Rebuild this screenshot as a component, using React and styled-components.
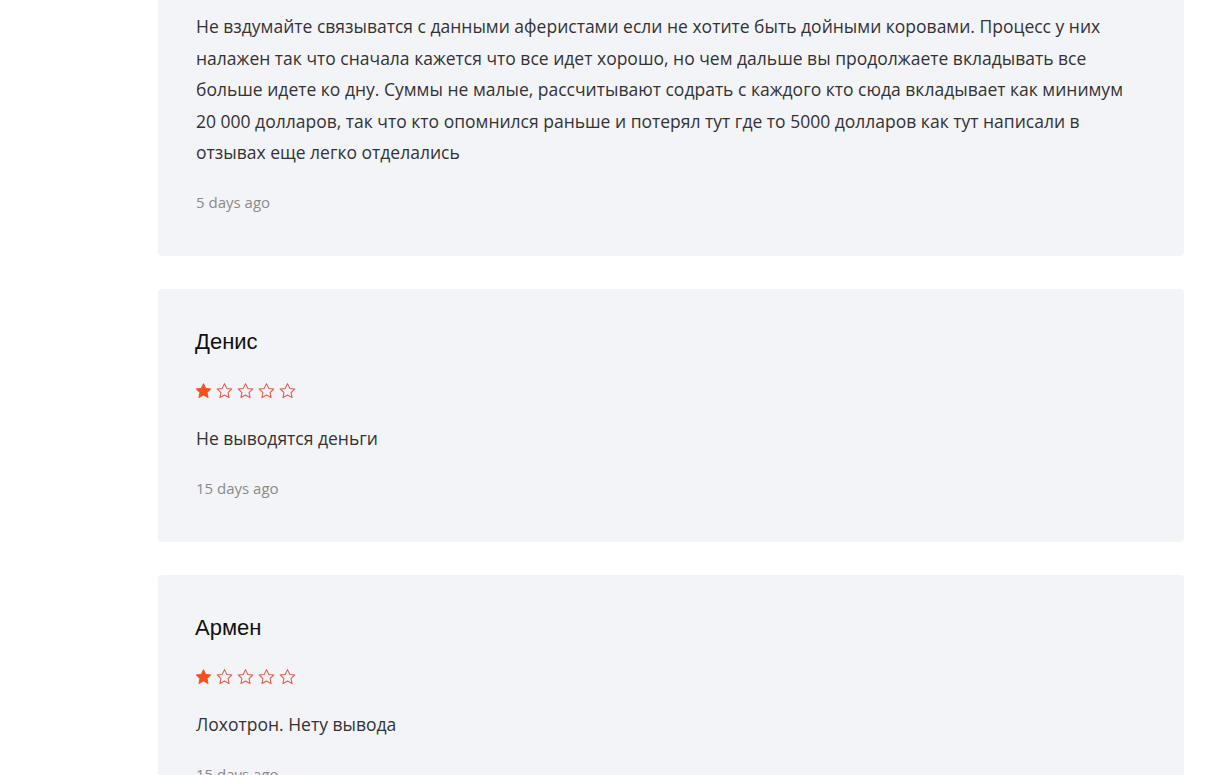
import React from 'react'
import styled, { createGlobalStyle } from 'styled-components'

const GlobalStyle = createGlobalStyle`
  html, body {
    margin: 0;
    padding: 0;
    background: #ffffff;
    overflow: hidden;
  }
`

const Feed = styled.div`
  display: flex;
  flex-direction: column;
  gap: 33.5px;
  width: 1026px;
  margin-left: 158px;
  margin-top: -123px;
`

const Card = styled.article`
  background-color: #f3f4f8;
  border-radius: 4px;
  padding: 39px 38px 44px 37px;
  display: flex;
  flex-direction: column;
`

const Author = styled.header`
  font-family: "Liberation Sans", Arial, sans-serif;
  font-size: 22px;
  line-height: 28px;
  color: #111111;
`

const Stars = styled.div`
  display: flex;
  gap: 4px;
  margin-top: 26px;
  height: 18px;
`

const Text = styled.p`
  margin: 23px 0 0 1px;
  font-family: "Open Sans", sans-serif;
  font-size: 17.5px;
  line-height: 31.5px;
  color: #333333;
`

const PostDate = styled.p`
  margin: 23px 0 0 1px;
  font-family: "Open Sans", sans-serif;
  font-size: 15px;
  line-height: 20px;
  color: #8a8a8a;
`

const STAR = 'M9 1.2l2.35 5.05 5.45.6-4.05 3.75 1.1 5.4L9 13.2l-4.85 2.8 1.1-5.4L1.2 6.85l5.45-.6z'

const Star = ({ filled }) => (
  <svg width="17" height="18" viewBox="0 0 18 18">
    <path
      d={STAR}
      fill={filled ? '#f4511e' : 'none'}
      stroke={filled ? '#f4511e' : '#e25545'}
      strokeWidth={filled ? 1 : 1.1}
      strokeLinejoin="round"
    />
  </svg>
)

const Rating = ({ value }) => (
  <Stars>
    {[1, 2, 3, 4, 5].map(i => <Star key={i} filled={i <= value} />)}
  </Stars>
)

const reviews = [
  {
    name: 'Ольга',
    rating: 1,
    text: 'Не вздумайте связыватся с данными аферистами если не хотите быть дойными коровами. Процесс у них налажен так что сначала кажется что все идет хорошо, но чем дальше вы продолжаете вкладывать все больше идете ко дну. Суммы не малые, рассчитывают содрать с каждого кто сюда вкладывает как минимум 20 000 долларов, так что кто опомнился раньше и потерял тут где то 5000 долларов как тут написали в отзывах еще легко отделались',
    date: '5 days ago',
  },
  { name: 'Денис', rating: 1, text: 'Не выводятся деньги', date: '15 days ago' },
  { name: 'Армен', rating: 1, text: 'Лохотрон. Нету вывода', date: '15 days ago' },
]

export default function App() {
  return (
    <>
      <GlobalStyle />
      <Feed>
        {reviews.map(r => (
          <Card key={r.name}>
            <Author>{r.name}</Author>
            <Rating value={r.rating} />
            <Text>{r.text}</Text>
            <PostDate>{r.date}</PostDate>
          </Card>
        ))}
      </Feed>
    </>
  )
}
